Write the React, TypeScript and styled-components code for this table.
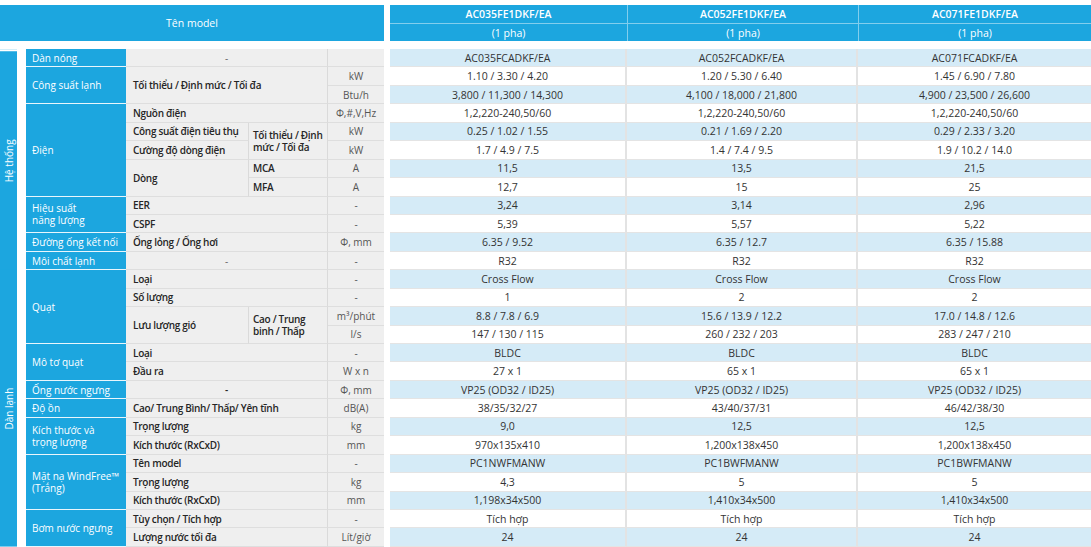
import React from "react";
import styled, { createGlobalStyle } from "styled-components";

const BLUE = "#1ca6df";
const ROW = 18.44;

const GlobalStyle = createGlobalStyle`
  html, body {
    margin: 0;
    padding: 0;
    background: #fff;
  }
  body {
    font-family: "Open Sans", "Noto Sans", sans-serif;
    color: #2b2b2b;
  }
`;

const Page = styled.div`
  width: 1091px;
  height: 547px;
  overflow: hidden;
  box-sizing: border-box;
  padding-top: 5px;
  display: flex;
  gap: 6px;
`;

const Panel = styled.div<{ $w?: number }>`
  display: flex;
  flex-direction: column;
  gap: 8px;
  ${(p) => (p.$w ? `width: ${p.$w}px; flex: none;` : `flex: 1;`)}
`;

const ModelTitle = styled.div`
  height: 36px;
  background: ${BLUE};
  color: #fff;
  font-size: 10.5px;
  display: flex;
  align-items: center;
  justify-content: center;
`;

const HeadGrid = styled.div`
  height: 36px;
  display: grid;
  grid-template-columns: 237px 231px 1fr;
  grid-template-rows: 18px 18px;
  background: ${BLUE};
`;

const HeadCell = styled.div<{ $first: boolean; $second: boolean }>`
  color: #fff;
  font-size: 10.5px;
  display: flex;
  align-items: center;
  justify-content: center;
  box-sizing: border-box;
  border-left: ${(p) => (p.$first ? "none" : "1px solid rgba(255,255,255,0.45)")};
  border-top: ${(p) => (p.$second ? "1px solid rgba(255,255,255,0.45)" : "none")};
  font-weight: ${(p) => (p.$second ? 500 : 600)};
`;

const SpecGrid = styled.div`
  display: grid;
  grid-template-columns: 17px 9px 100px 123px 79px 1fr;
  grid-template-rows: repeat(27, ${ROW}px);
`;

type Place = { $r: number; $rs?: number; $c: number; $cs?: number };

const placed = (p: Place) => `
  grid-row: ${p.$r} / span ${p.$rs ?? 1};
  grid-column: ${p.$c} / span ${p.$cs ?? 1};
`;

const Category = styled.div<Place & { $gap?: boolean }>`
  ${placed}
  background: ${BLUE};
  color: #fff;
  font-size: 10px;
  writing-mode: vertical-rl;
  transform: rotate(180deg);
  display: flex;
  align-items: center;
  justify-content: center;
  box-sizing: border-box;
  border-bottom: ${(p) => (p.$gap ? "2px solid #fff" : "none")};
`;

const Label = styled.div<Place>`
  ${placed}
  background: ${BLUE};
  color: #fff;
  font-size: 10px;
  line-height: 12px;
  padding-left: 6px;
  display: flex;
  align-items: center;
  box-sizing: border-box;
  border-bottom: 1px solid #e9f6fc;
`;

const Spec = styled.div<Place & { $center?: boolean; $dash?: boolean }>`
  ${placed}
  background: #efefef;
  font-size: 10px;
  line-height: 12px;
  letter-spacing: -0.3px;
  white-space: nowrap;
  font-weight: ${(p) => (p.$dash ? 400 : 600)};
  color: ${(p) => (p.$dash ? "#666" : "#262626")};
  padding-left: ${(p) => (p.$center ? 0 : p.$c === 5 ? 4 : 7)}px;
  display: flex;
  align-items: center;
  justify-content: ${(p) => (p.$center ? "center" : "flex-start")};
  box-sizing: border-box;
  border-right: 1px solid #dadada;
  border-bottom: 1px solid #dedede;
`;

const Unit = styled.div<Place>`
  ${placed}
  background: #efefef;
  font-size: 10px;
  color: #555;
  display: flex;
  align-items: center;
  justify-content: center;
  box-sizing: border-box;
  border-bottom: 1px solid #dedede;
`;

const DataGrid = styled.div`
  display: grid;
  grid-template-columns: 237px 231px 1fr;
  grid-template-rows: repeat(27, ${ROW}px);
`;

const DataCell = styled.div<{ $alt: boolean; $last: boolean }>`
  background: ${(p) => (p.$alt ? "#d5ebf7" : "#fff")};
  font-size: 10.5px;
  color: #333;
  display: flex;
  align-items: center;
  justify-content: center;
  box-sizing: border-box;
  border-right: ${(p) => (p.$last ? "none" : "2px solid #e3e3e3")};
  border-bottom: 1px solid #e4e4e4;
`;

const models = [
  ["AC035FE1DKF/EA", "(1 pha)"],
  ["AC052FE1DKF/EA", "(1 pha)"],
  ["AC071FE1DKF/EA", "(1 pha)"],
];

const rows: string[][] = [
  ["AC035FCADKF/EA", "AC052FCADKF/EA", "AC071FCADKF/EA"],
  ["1.10 / 3.30 / 4.20", "1.20 / 5.30 / 6.40", "1.45 / 6.90 / 7.80"],
  ["3,800 / 11,300 / 14,300", "4,100 / 18,000 / 21,800", "4,900 / 23,500 / 26,600"],
  ["1,2,220-240,50/60", "1,2,220-240,50/60", "1,2,220-240,50/60"],
  ["0.25 / 1.02 / 1.55", "0.21 / 1.69 / 2.20", "0.29 / 2.33 / 3.20"],
  ["1.7 / 4.9 / 7.5", "1.4 / 7.4 / 9.5", "1.9 / 10.2 / 14.0"],
  ["11,5", "13,5", "21,5"],
  ["12,7", "15", "25"],
  ["3,24", "3,14", "2,96"],
  ["5,39", "5,57", "5,22"],
  ["6.35 / 9.52", "6.35 / 12.7", "6.35 / 15.88"],
  ["R32", "R32", "R32"],
  ["Cross Flow", "Cross Flow", "Cross Flow"],
  ["1", "2", "2"],
  ["8.8 / 7.8 / 6.9", "15.6 / 13.9 / 12.2", "17.0 / 14.8 / 12.6"],
  ["147 / 130 / 115", "260 / 232 / 203", "283 / 247 / 210"],
  ["BLDC", "BLDC", "BLDC"],
  ["27 x 1", "65 x 1", "65 x 1"],
  ["VP25 (OD32 / ID25)", "VP25 (OD32 / ID25)", "VP25 (OD32 / ID25)"],
  ["38/35/32/27", "43/40/37/31", "46/42/38/30"],
  ["9,0", "12,5", "12,5"],
  ["970x135x410", "1,200x138x450", "1,200x138x450"],
  ["PC1NWFMANW", "PC1BWFMANW", "PC1BWFMANW"],
  ["4,3", "5", "5"],
  ["1,198x34x500", "1,410x34x500", "1,410x34x500"],
  ["Tích hợp", "Tích hợp", "Tích hợp"],
  ["24", "24", "24"],
];

type L = { r: number; rs?: number; t: React.ReactNode };
const labels: L[] = [
  { r: 1, t: "Dàn nóng" },
  { r: 2, rs: 2, t: "Công suất lạnh" },
  { r: 4, rs: 5, t: "Điện" },
  { r: 9, rs: 2, t: <span>Hiệu suất<br />năng lượng</span> },
  { r: 11, t: "Đường ống kết nối" },
  { r: 12, t: "Môi chất lạnh" },
  { r: 13, rs: 4, t: "Quạt" },
  { r: 17, rs: 2, t: "Mô tơ quạt" },
  { r: 19, t: "Ống nước ngưng" },
  { r: 20, t: "Độ ồn" },
  { r: 21, rs: 2, t: <span>Kích thước và<br />trọng lượng</span> },
  { r: 23, rs: 3, t: <span>Mặt nạ WindFree™<br />(Trắng)</span> },
  { r: 26, rs: 2, t: "Bơm nước ngưng" },
];

type S = { r: number; rs?: number; c: number; cs?: number; t: React.ReactNode; dash?: boolean };
const specs: S[] = [
  { r: 1, c: 4, cs: 2, t: "-", dash: true },
  { r: 2, rs: 2, c: 4, cs: 2, t: "Tối thiểu / Định mức / Tối đa" },
  { r: 4, c: 4, cs: 2, t: "Nguồn điện" },
  { r: 5, c: 4, t: "Công suất điện tiêu thụ" },
  { r: 6, c: 4, t: "Cường độ dòng điện" },
  { r: 5, rs: 2, c: 5, t: <span>Tối thiểu / Định<br />mức / Tối đa</span> },
  { r: 7, rs: 2, c: 4, t: "Dòng" },
  { r: 7, c: 5, t: "MCA" },
  { r: 8, c: 5, t: "MFA" },
  { r: 9, c: 4, cs: 2, t: "EER" },
  { r: 10, c: 4, cs: 2, t: "CSPF" },
  { r: 11, c: 4, cs: 2, t: "Ống lỏng / Ống hơi" },
  { r: 12, c: 4, cs: 2, t: "-", dash: true },
  { r: 13, c: 4, cs: 2, t: "Loại" },
  { r: 14, c: 4, cs: 2, t: "Số lượng" },
  { r: 15, rs: 2, c: 4, t: "Lưu lượng gió" },
  { r: 15, rs: 2, c: 5, t: <span>Cao / Trung<br />binh / Thấp</span> },
  { r: 17, c: 4, cs: 2, t: "Loại" },
  { r: 18, c: 4, cs: 2, t: "Đầu ra" },
  { r: 19, c: 4, cs: 2, t: "-" },
  { r: 20, c: 4, cs: 2, t: "Cao/ Trung Bình/ Thấp/ Yên tĩnh" },
  { r: 21, c: 4, cs: 2, t: "Trọng lượng" },
  { r: 22, c: 4, cs: 2, t: "Kích thước (RxCxD)" },
  { r: 23, c: 4, cs: 2, t: "Tên model" },
  { r: 24, c: 4, cs: 2, t: "Trọng lượng" },
  { r: 25, c: 4, cs: 2, t: "Kích thước (RxCxD)" },
  { r: 26, c: 4, cs: 2, t: "Tùy chọn / Tích hợp" },
  { r: 27, c: 4, cs: 2, t: "Lượng nước tối đa" },
];

const units: [number, string][] = [
  [1, ""], [2, "kW"], [3, "Btu/h"], [4, "Φ,#,V,Hz"], [5, "kW"], [6, "kW"],
  [7, "A"], [8, "A"], [9, "-"], [10, "-"], [11, "Φ, mm"], [12, "-"],
  [13, "-"], [14, "-"], [15, "m³/phút"], [16, "l/s"], [17, "-"], [18, "W x n"],
  [19, "Φ, mm"], [20, "dB(A)"], [21, "kg"], [22, "mm"], [23, "-"], [24, "kg"],
  [25, "mm"], [26, "-"], [27, "Lít/giờ"],
];

export default function App() {
  return (
    <>
      <GlobalStyle />
      <Page>
        <Panel $w={384}>
          <ModelTitle>Tên model</ModelTitle>
          <SpecGrid>
            <Category $r={1} $rs={12} $c={1} $gap>Hệ thống</Category>
            <Category $r={13} $rs={15} $c={1}>Dàn lạnh</Category>
            {labels.map((l) => (
              <Label key={l.r} $r={l.r} $rs={l.rs} $c={3}>
                {l.t}
              </Label>
            ))}
            {specs.map((s, i) => (
              <Spec
                key={i}
                $r={s.r}
                $rs={s.rs}
                $c={s.c}
                $cs={s.cs}
                $center={s.t === "-"}
                $dash={s.dash}
              >
                {s.t}
              </Spec>
            ))}
            {units.map(([r, u]) => (
              <Unit key={r} $r={r} $c={6}>
                {u}
              </Unit>
            ))}
          </SpecGrid>
        </Panel>
        <Panel>
          <HeadGrid>
            {models.map((m, i) => (
              <HeadCell key={"a" + i} $first={i === 0} $second={false}>
                {m[0]}
              </HeadCell>
            ))}
            {models.map((m, i) => (
              <HeadCell key={"b" + i} $first={i === 0} $second>
                {m[1]}
              </HeadCell>
            ))}
          </HeadGrid>
          <DataGrid>
            {rows.map((row, ri) =>
              row.map((v, ci) => (
                <DataCell key={ri + "-" + ci} $alt={ri % 2 === 0} $last={ci === 2}>
                  {v}
                </DataCell>
              ))
            )}
          </DataGrid>
        </Panel>
      </Page>
    </>
  );
}
